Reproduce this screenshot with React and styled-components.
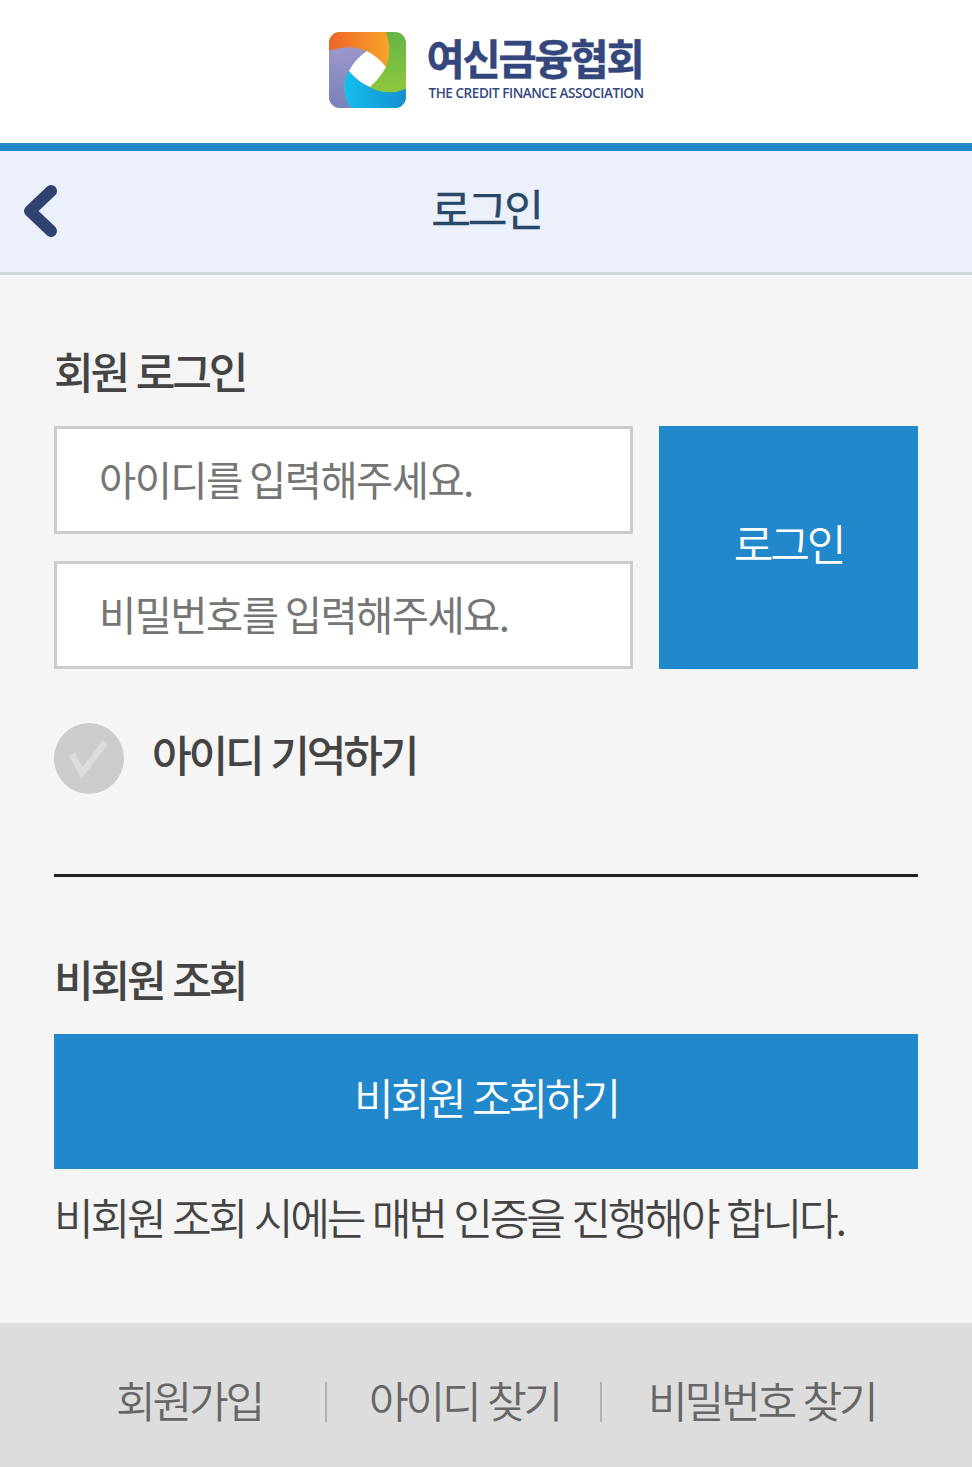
import React from 'react'
import styled, { createGlobalStyle } from 'styled-components'

const GlobalStyle = createGlobalStyle`
  * {
    box-sizing: border-box;
  }

  body {
    margin: 0;
    background-color: #f5f5f5;
    color: #444;
    font-family: 'Noto Sans CJK KR', sans-serif;
    font-size: 43.2px;
    letter-spacing: -3.24px;
    word-spacing: 2.2px;
  }

  button, input {
    font: inherit;
    letter-spacing: inherit;
    word-spacing: inherit;
    border-radius: 0;
    margin: 0;
  }
`

const Page = styled.div`
  width: 972px;
  height: 1467px;
  display: flex;
  flex-direction: column;
  overflow: hidden;
`

const Header = styled.header`
  height: 151px;
  flex: none;
  display: flex;
  justify-content: center;
  padding-top: 32px;
  background-color: #fff;
  border-bottom: 8px solid #2288cc;
`

const LogoMark = styled.svg`
  width: 77px;
  height: 76px;
  margin-right: 21px;
`

const LogoText = styled.div`
  width: 217px;
  color: #34477d;
  white-space: nowrap;
`

const LogoName = styled.div`
  height: 54px;
  line-height: 51px;
  font-size: 41.5px;
  font-weight: 700;
  letter-spacing: -2.2px;
  -webkit-text-stroke: 0.5px #34477d;
`

const LogoSub = styled.div`
  padding-left: 2px;
  line-height: 15px;
  font-family: 'Open Sans', sans-serif;
  font-size: 13.5px;
  font-weight: 600;
  letter-spacing: -0.45px;
  word-spacing: 0;
`

const TitleBar = styled.div`
  height: 124px;
  flex: none;
  display: grid;
  grid-template-columns: 80px 1fr 80px;
  align-items: center;
  background-color: #ebf0fa;
  border-bottom: 3px solid #d0d9de;
`

const Back = styled.button`
  display: flex;
  padding: 0 0 1px 23px;
  border: none;
  background: none;
`

const PageTitle = styled.h1`
  margin: 0;
  padding-bottom: 9px;
  line-height: 64px;
  font-size: inherit;
  font-weight: 400;
  text-align: center;
  color: #294868;
  -webkit-text-stroke: 0.4px #294868;
`

const Content = styled.main`
  flex: 1;
  padding: 63px 54px 0;
`

const Heading = styled.h2`
  margin: 0 0 24px;
  line-height: 64px;
  font-size: inherit;
  font-weight: 500;
`

const LoginForm = styled.form`
  display: grid;
  grid-template-columns: 579px 259px;
  grid-template-rows: 108px 108px;
  gap: 27px 26px;
`

const Field = styled.input`
  width: 100%;
  padding: 0 42px 4px;
  border: 3px solid #ccc;
  background-color: #fff;
  font-size: 40.5px;
  letter-spacing: -1.6px;
  word-spacing: 0;

  &::placeholder {
    color: #757575;
    opacity: 1;
  }
`

const Button = styled.button`
  padding: 0 0 11px;
  border: none;
  background-color: #2288cc;
  color: #fff;
  font-weight: 350;
`

const LoginButton = styled(Button)`
  grid-column: 2;
  grid-row: 1 / 3;
`

const LookupButton = styled(Button)`
  display: block;
  width: 100%;
  height: 135px;
`

const Remember = styled.label`
  display: flex;
  align-items: center;
  height: 71px;
  margin-top: 54px;
  line-height: 64px;
  font-weight: 500;
`

const RememberText = styled.span`
  padding-bottom: 11px;
  margin-left: 28px;
`

const Divider = styled.hr`
  margin: 80px 0 69px;
  border: none;
  height: 3px;
  background-color: #222;
`

const Note = styled.p`
  margin: 15px 0 0;
  line-height: 64px;
  font-weight: 350;
  white-space: nowrap;
`

const Footer = styled.footer`
  height: 144px;
  flex: none;
  display: flex;
  align-items: center;
  padding: 0 0 0 116px;
  background-color: #ddd;
  color: #666;
  font-weight: 350;
  white-space: nowrap;
`

const FooterLink = styled.a`
  width: ${props => props.$width}px;
  padding-top: 8px;
  line-height: 64px;
`

const Bar = styled.span`
  width: 2px;
  height: 40px;
  margin-top: 14px;
  margin-right: ${props => props.$gap}px;
  background-color: #b0b0b0;
`

const Logo = () => (
  <LogoMark viewBox='0 0 77 76'>
    <defs>
      <clipPath id='mark'>
        <rect width='77' height='76' rx='11' />
      </clipPath>
      <linearGradient id='orange' x1='0' x2='1'>
        <stop offset='0' stopColor='#ee6428' />
        <stop offset='1' stopColor='#f7a428' />
      </linearGradient>
      <linearGradient id='green' x1='0' y1='0' x2='0' y2='1'>
        <stop offset='0' stopColor='#66b545' />
        <stop offset='1' stopColor='#98cb3c' />
      </linearGradient>
      <linearGradient id='purple' x1='0' y1='0' x2='0' y2='1'>
        <stop offset='0' stopColor='#9d97ca' />
        <stop offset='1' stopColor='#7682ba' />
      </linearGradient>
      <linearGradient id='cyan' x1='0' x2='1'>
        <stop offset='0' stopColor='#14bfea' />
        <stop offset='1' stopColor='#168ed2' />
      </linearGradient>
    </defs>
    <g clipPath='url(#mark)'>
      <rect width='77' height='76' fill='url(#green)' />
      <path d='M0 0H57Q64 20 56 37L39 38L20 40L0 20Z' fill='url(#orange)' />
      <path d='M0 19Q21 11 39 20L40 38L21 38Q9 55 22 76H0Z' fill='url(#purple)' />
      <path d='M21 37Q9 55 22 76H77V57Q56 65 39 54Z' fill='url(#cyan)' />
      <path d='M38 19Q48 24 57 35Q51 46 41 55Q29 50 20 39Q26 27 38 19Z' fill='#fff' />
    </g>
  </LogoMark>
)

const App = () => (
  <Page>
    <GlobalStyle />
    <Header>
      <Logo />
      <LogoText>
        <LogoName>여신금융협회</LogoName>
        <LogoSub>THE CREDIT FINANCE ASSOCIATION</LogoSub>
      </LogoText>
    </Header>
    <TitleBar>
      <Back type='button' aria-label='뒤로'>
        <svg width='35' height='54' viewBox='0 0 35 54'>
          <path d='M28 7L7 27L28 47' fill='none' stroke='#30426f' strokeWidth='12' strokeLinecap='round' strokeLinejoin='round' />
        </svg>
      </Back>
      <PageTitle>로그인</PageTitle>
    </TitleBar>
    <Content>
      <Heading>회원 로그인</Heading>
      <LoginForm>
        <Field type='text' placeholder='아이디를 입력해주세요.' />
        <Field type='password' placeholder='비밀번호를 입력해주세요.' />
        <LoginButton type='button'>로그인</LoginButton>
      </LoginForm>
      <Remember>
        <svg width='70' height='71' viewBox='0 0 70 71'>
          <ellipse cx='35' cy='35.5' rx='35' ry='35.5' fill='#ccc' />
          <path d='M18 31L28 50L51 20' fill='none' stroke='#dcdcdc' strokeWidth='6.5' />
        </svg>
        <RememberText>아이디 기억하기</RememberText>
      </Remember>
      <Divider />
      <Heading>비회원 조회</Heading>
      <LookupButton type='button'>비회원 조회하기</LookupButton>
      <Note>비회원 조회 시에는 매번 인증을 진행해야 합니다.</Note>
    </Content>
    <Footer>
      <FooterLink $width={209}>회원가입</FooterLink>
      <Bar $gap={42} />
      <FooterLink $width={231}>아이디 찾기</FooterLink>
      <Bar $gap={46} />
      <FooterLink $width={230}>비밀번호 찾기</FooterLink>
    </Footer>
  </Page>
)

export default App
